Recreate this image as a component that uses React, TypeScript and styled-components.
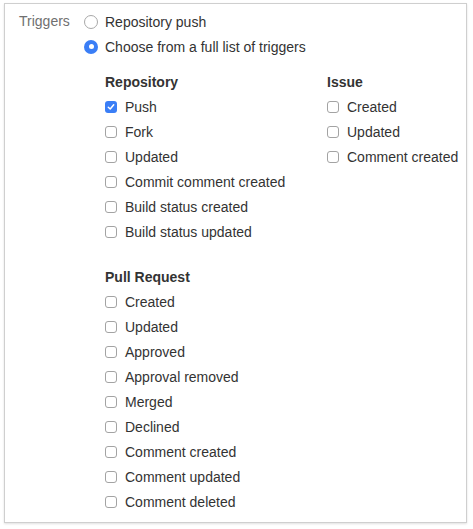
import React from 'react';
import styled, { createGlobalStyle } from 'styled-components';

const GlobalStyle = createGlobalStyle`
  html, body {
    margin: 0;
    padding: 0;
    background: #ffffff;
  }

  body {
    font-family: 'Liberation Sans', Arial, Helvetica, sans-serif;
    font-size: 14px;
    color: #333333;
  }
`;

const Panel = styled.section`
  margin: 3px 5px 5px 4px;
  width: 463px;
  box-sizing: border-box;
  border: 1px solid #cfcfcf;
  box-shadow: 0 1px 2px rgba(0, 0, 0, 0.12);
  padding: 5px 14px 8px 14px;
  display: flex;
`;

const FieldLabel = styled.div`
  width: 65px;
  flex-shrink: 0;
  height: 25px;
  line-height: 25px;
  color: #707070;
`;

const Options = styled.div`
  display: flex;
  flex-direction: column;
`;

const RadioRow = styled.label`
  display: flex;
  align-items: center;
  height: 25px;
  gap: 7px;
  color: #333333;
`;

const Radio = styled.span<{ $checked?: boolean }>`
  width: 14px;
  height: 14px;
  box-sizing: border-box;
  border-radius: 50%;
  border: ${(p) => (p.$checked ? 'none' : '1px solid #a8a8a8')};
  background: ${(p) => (p.$checked ? '#3a7ef6' : '#ffffff')};
  display: flex;
  align-items: center;
  justify-content: center;

  &::after {
    content: '';
    display: ${(p) => (p.$checked ? 'block' : 'none')};
    width: 5px;
    height: 5px;
    border-radius: 50%;
    background: #ffffff;
  }
`;

const TriggerGrid = styled.div`
  margin: 11px 0 0 21px;
  display: grid;
  grid-template-columns: 222px auto;
  row-gap: 21px;
`;

const Group = styled.div`
  display: flex;
  flex-direction: column;
`;

const GroupTitle = styled.div`
  height: 24px;
  line-height: 25px;
  font-weight: 700;
  color: #333333;
`;

const CheckRow = styled.label`
  display: flex;
  align-items: center;
  height: 25px;
  gap: 8px;
  white-space: nowrap;
`;

const Box = styled.span<{ $checked?: boolean }>`
  width: 12px;
  height: 12px;
  box-sizing: border-box;
  border-radius: 3px;
  border: ${(p) => (p.$checked ? 'none' : '1px solid #a3a3a3')};
  background: ${(p) => (p.$checked ? '#3a7ef6' : '#ffffff')};
  display: flex;
  align-items: center;
  justify-content: center;
  flex-shrink: 0;
`;

const Check = () => (
  <svg width="8" height="8" viewBox="0 0 8 8">
    <path
      d="M1.3 4.2 L3.2 6 L6.7 1.8"
      fill="none"
      stroke="#ffffff"
      strokeWidth="1.5"
      strokeLinecap="round"
      strokeLinejoin="round"
    />
  </svg>
);

type Item = { label: string; checked?: boolean };

const repository: Item[] = [
  { label: 'Push', checked: true },
  { label: 'Fork' },
  { label: 'Updated' },
  { label: 'Commit comment created' },
  { label: 'Build status created' },
  { label: 'Build status updated' },
];

const issue: Item[] = [
  { label: 'Created' },
  { label: 'Updated' },
  { label: 'Comment created' },
];

const pullRequest: Item[] = [
  { label: 'Created' },
  { label: 'Updated' },
  { label: 'Approved' },
  { label: 'Approval removed' },
  { label: 'Merged' },
  { label: 'Declined' },
  { label: 'Comment created' },
  { label: 'Comment updated' },
  { label: 'Comment deleted' },
];

const TriggerGroup: React.FC<{ title: string; items: Item[] }> = ({ title, items }) => (
  <Group>
    <GroupTitle>{title}</GroupTitle>
    {items.map((item) => (
      <CheckRow key={item.label}>
        <Box $checked={item.checked}>{item.checked && <Check />}</Box>
        {item.label}
      </CheckRow>
    ))}
  </Group>
);

const App: React.FC = () => {
  return (
    <>
      <GlobalStyle />
      <Panel>
        <FieldLabel>Triggers</FieldLabel>
        <Options>
          <RadioRow>
            <Radio />
            Repository push
          </RadioRow>
          <RadioRow>
            <Radio $checked />
            Choose from a full list of triggers
          </RadioRow>
          <TriggerGrid>
            <TriggerGroup title="Repository" items={repository} />
            <TriggerGroup title="Issue" items={issue} />
            <TriggerGroup title="Pull Request" items={pullRequest} />
          </TriggerGrid>
        </Options>
      </Panel>
    </>
  );
};

export default App;
